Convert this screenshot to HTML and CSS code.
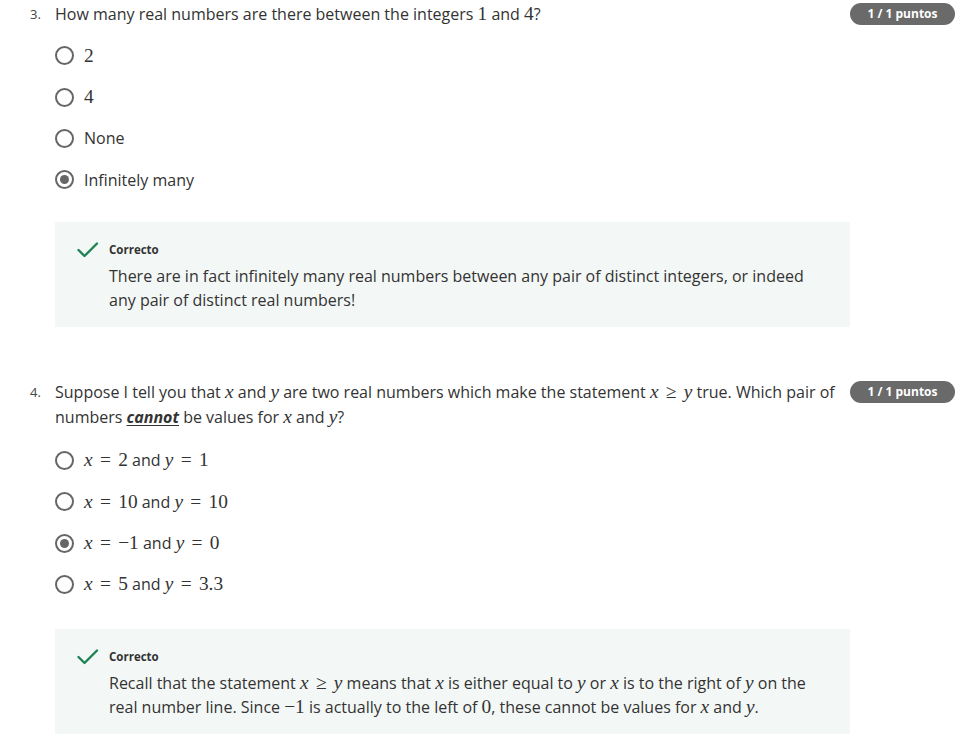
FILE: index.html
```html
<!DOCTYPE html>
<html lang="en">
<head>
<meta charset="utf-8">
<title>Quiz</title>
<link rel="stylesheet" href="styles.css">
</head>
<body>
<div class="quiz">
  <section class="question q3">
    <div class="q-head">
      <span class="q-num">3.</span>
      <div class="q-text">How many real numbers are there between the integers <span class="mn">1</span> and <span class="mn">4</span>?</div>
      <span class="badge">1 / 1 puntos</span>
    </div>
    <div class="options">
      <div class="opt"><span class="radio"></span><span class="opt-text"><span class="mn">2</span></span></div>
      <div class="opt"><span class="radio"></span><span class="opt-text"><span class="mn">4</span></span></div>
      <div class="opt"><span class="radio"></span><span class="opt-text">None</span></div>
      <div class="opt"><span class="radio checked"></span><span class="opt-text">Infinitely many</span></div>
    </div>
    <div class="feedback">
      <svg class="check" width="22" height="18" viewBox="0 0 22 18"><polyline points="1.5,9 7.5,15 20,2.5" fill="none" stroke="#1f8354" stroke-width="2.4" stroke-linecap="round" stroke-linejoin="round"/></svg>
      <div class="fb-body">
        <div class="fb-title">Correcto</div>
        <p class="fb-text">There are in fact infinitely many real numbers between any pair of distinct integers, or indeed any pair of distinct real numbers!</p>
      </div>
    </div>
  </section>

  <section class="question q4">
    <div class="q-head">
      <span class="q-num">4.</span>
      <div class="q-text">Suppose I tell you that <span class="mi">x</span> and <span class="mi">y</span> are two real numbers which make the statement <span class="mi">x</span><span class="mr">≥</span><span class="mi">y</span> true. Which pair of <span class="w">numbers</span> <span class="cannot">cannot</span> be values for <span class="mi">x</span> and <span class="mi">y</span>?</div>
      <span class="badge">1 / 1 puntos</span>
    </div>
    <div class="options">
      <div class="opt"><span class="radio"></span><span class="opt-text"><span class="mi">x</span><span class="mr">=</span><span class="mn">2</span> and <span class="mi">y</span><span class="mr">=</span><span class="mn">1</span></span></div>
      <div class="opt"><span class="radio"></span><span class="opt-text"><span class="mi">x</span><span class="mr">=</span><span class="mn">10</span> and <span class="mi">y</span><span class="mr">=</span><span class="mn">10</span></span></div>
      <div class="opt"><span class="radio checked"></span><span class="opt-text"><span class="mi">x</span><span class="mr">=</span><span class="mn">−1</span> and <span class="mi">y</span><span class="mr">=</span><span class="mn">0</span></span></div>
      <div class="opt"><span class="radio"></span><span class="opt-text"><span class="mi">x</span><span class="mr">=</span><span class="mn">5</span> and <span class="mi">y</span><span class="mr">=</span><span class="mn">3.3</span></span></div>
    </div>
    <div class="feedback">
      <svg class="check" width="22" height="18" viewBox="0 0 22 18"><polyline points="1.5,9 7.5,15 20,2.5" fill="none" stroke="#1f8354" stroke-width="2.4" stroke-linecap="round" stroke-linejoin="round"/></svg>
      <div class="fb-body">
        <div class="fb-title">Correcto</div>
        <p class="fb-text">Recall that the statement <span class="mi">x</span><span class="mr">≥</span><span class="mi">y</span> means that <span class="mi">x</span> is either equal to <span class="mi">y</span> or <span class="mi">x</span> is to the right of <span class="mi">y</span> on the <span class="w">real</span> number line. Since <span class="mn">−1</span> is actually to the left of <span class="mn">0</span>, these cannot be values for <span class="mi">x</span> and <span class="mi">y</span>.</p>
      </div>
    </div>
  </section>
</div>
</body>
</html>
```

FILE: styles.css
```css
* { box-sizing: border-box; }

body {
  margin: 0;
  background: #ffffff;
  font-family: "Open Sans", "Liberation Sans", sans-serif;
  font-size: 16px;
  color: #333333;
}

.quiz {
  width: 980px;
}

.question {
  padding: 2px 25px 0 30px;
}

.q4 {
  padding-top: 53px;
}

.q-head {
  display: flex;
  align-items: flex-start;
}

.q-num {
  width: 25px;
  flex: none;
  font-size: 13px;
  line-height: 24px;
  color: #444;
}

.q-text {
  flex: 1;
  line-height: 25px;
  padding-right: 8px;
}

.badge {
  flex: none;
  margin-top: 1px;
  width: 105px;
  height: 22px;
  border-radius: 11px;
  background: #6a6a6a;
  color: #ffffff;
  font-size: 12px;
  font-weight: 700;
  line-height: 22px;
  text-align: center;
}

.mi,
.mn,
.mr {
  font-family: "Liberation Serif", "DejaVu Serif", serif;
  font-size: 1.21em;
  line-height: 1;
  white-space: nowrap;
}

.mi {
  font-style: italic;
}

.mr {
  padding: 0 0.38em;
}

.cannot {
  font-weight: 700;
  font-style: italic;
  text-decoration: underline;
  text-underline-offset: 2px;
}

.options {
  margin-top: 8px;
  padding-left: 25px;
}

.q4 .options {
  margin-top: 10px;
}

.opt {
  height: 41.4px;
  display: flex;
  align-items: center;
}

.radio {
  flex: none;
  width: 19px;
  height: 19px;
  border: 2px solid #666666;
  border-radius: 50%;
  display: flex;
  align-items: center;
  justify-content: center;
  margin-right: 10px;
}

.radio.checked::after {
  content: "";
  width: 9px;
  height: 9px;
  border-radius: 50%;
  background: #666666;
}

.opt-text {
  line-height: 24px;
}

.feedback {
  margin-top: 21px;
  margin-left: 25px;
  width: 795px;
  background: #f3f8f6;
  padding: 20px 22px 15px 22px;
  display: flex;
  align-items: flex-start;
}

.q4 .feedback {
  margin-top: 24px;
}

.check {
  flex: none;
  margin-right: 10px;
  margin-top: -1px;
}

.fb-title {
  font-size: 11.5px;
  font-weight: 700;
  line-height: 16px;
  color: #333333;
}

.fb-text {
  margin: 6px 0 0 0;
  line-height: 24px;
}
```
